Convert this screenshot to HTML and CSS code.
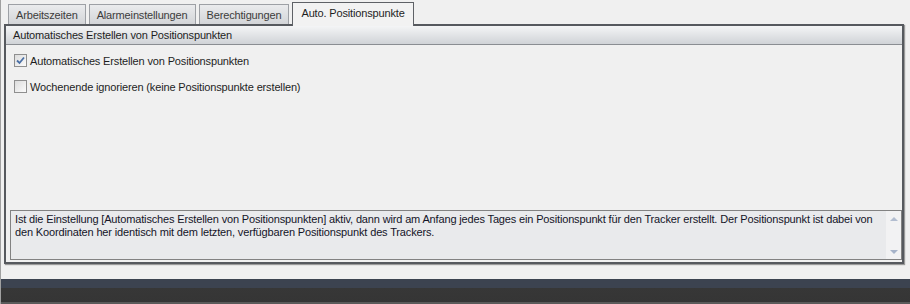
FILE: index.html
```html
<!DOCTYPE html>
<html lang="de">

<head>
    <meta charset="UTF-8">
    <title>Auto. Positionspunkte</title>
    <link rel="stylesheet" href="styles.css">
</head>

<body>
    <div class="main-wrap">
        <section class="tab-wrap">
            <div class="tab">Arbeitszeiten</div>
            <div class="tab">Alarmeinstellungen</div>
            <div class="tab">Berechtigungen</div>
            <div class="tab tab-active">Auto. Positionspunkte</div>
        </section>
        <section class="panel">
            <header class="panel-header">Automatisches Erstellen von Positionspunkten</header>
            <div class="panel-body">
                <label class="check-row">
                    <span class="check-box checked">
                        <svg width="9" height="9" viewBox="0 0 9 9">
                            <path d="M1 4.5 L3.5 7 L8 1.5" fill="none" stroke="#4a6fa5" stroke-width="1.8"/>
                        </svg>
                    </span>
                    Automatisches Erstellen von Positionspunkten
                </label>
                <label class="check-row">
                    <span class="check-box"></span>
                    Wochenende ignorieren (keine Positionspunkte erstellen)
                </label>
                <div class="spacer"></div>
                <div class="info-box">
                    <div class="info-text">Ist die Einstellung [Automatisches Erstellen von Positionspunkten] aktiv, dann wird am Anfang jedes Tages ein Positionspunkt für den Tracker erstellt. Der Positionspunkt ist dabei von den Koordinaten her identisch mit dem letzten, verfügbaren Positionspunkt des Trackers.</div>
                    <div class="scroll-bar">
                        <span class="arrow arrow-up"></span>
                        <span class="arrow arrow-down"></span>
                    </div>
                </div>
            </div>
        </section>
        <div class="bottom-gap"></div>
        <footer class="status-bar"></footer>
    </div>
</body>

</html>
```

FILE: styles.css
```css
html,
body {
    padding: 0;
    margin: 0;

    height: 100%;
    width: 100%;
}

body {
    background-color: #f0f0f0;
    font-family: "Liberation Sans", Arial, sans-serif;
    font-size: 11px;
    letter-spacing: -0.15px;
    color: #1e1e1e;
}

.main-wrap {
    height: 304px;
    display: flex;
    flex-direction: column;
    border-left: 1px solid #a0a0a0;
    box-sizing: border-box;
}

.tab-wrap {
    display: flex;
    align-items: flex-end;
    gap: 3px;

    padding: 4px 0 0 7px;
    height: 24px;
    box-sizing: border-box;
}

.tab {
    height: 20px;
    line-height: 20px;
    padding: 0 7px;
    box-sizing: border-box;

    border: 1px solid #9da0a5;
    border-bottom: 0;
    background: linear-gradient(#eaebed, #d3d5d8);
    color: #3c3c3c;
}

.tab-active {
    height: 24px;
    line-height: 21px;
    margin-bottom: -2px;
    padding: 0 8px;

    border-color: #5e6166;
    background: #f2f2f2;
    color: #1e1e1e;
    position: relative;
    z-index: 1;
}

.panel {
    margin: 0 6px 0 3px;
    height: 240px;
    display: flex;
    flex-direction: column;
    box-sizing: border-box;

    border: 2px solid #56595e;
    box-shadow: 1px 1px 1px #9a9a9a;
}

.panel-header {
    height: 19px;
    line-height: 19px;
    padding-left: 7px;
    box-sizing: border-box;

    border-bottom: 1px solid #8a8d92;
    background: linear-gradient(#f4f5f6, #d0d3d7);
}

.panel-body {
    flex: 1;
    display: flex;
    flex-direction: column;
    padding: 9px 0 2px 4px;
    background-color: #f0f0f0;
}

.check-row {
    display: flex;
    align-items: center;
    gap: 3px;
    height: 13px;
    margin: 0 0 13px 4px;
}

.check-box {
    width: 11px;
    height: 11px;
    display: flex;
    align-items: center;
    justify-content: center;

    border: 1px solid #8f8f8f;
    background: linear-gradient(135deg, #dcdcdc, #fbfbfb);
}

.spacer {
    flex: 1;
}

.info-box {
    height: 50px;
    display: flex;
    box-sizing: border-box;

    border: 1px solid #828282;
    background-color: #e9eaec;
}

.info-text {
    flex: 1;
    padding: 2px 4px;
    line-height: 13px;
    color: #141428;
}

.scroll-bar {
    width: 15px;
    display: flex;
    flex-direction: column;
    justify-content: space-between;
    align-items: center;
    padding: 6px 0 5px;
    background-color: #f2f2f3;
}

.arrow {
    width: 0;
    height: 0;
    border-left: 4px solid transparent;
    border-right: 4px solid transparent;
}

.arrow-up {
    border-bottom: 4px solid #b2bdd0;
}

.arrow-down {
    border-top: 4px solid #a6b3c9;
}

.bottom-gap {
    flex: 1;
}

.status-bar {
    height: 25px;
    background: linear-gradient(#3c4350 0, #3c4350 9px, #373737 9px, #353535 100%);
    border-bottom: 2px solid #5a5a5a;
    box-sizing: border-box;
}
```
